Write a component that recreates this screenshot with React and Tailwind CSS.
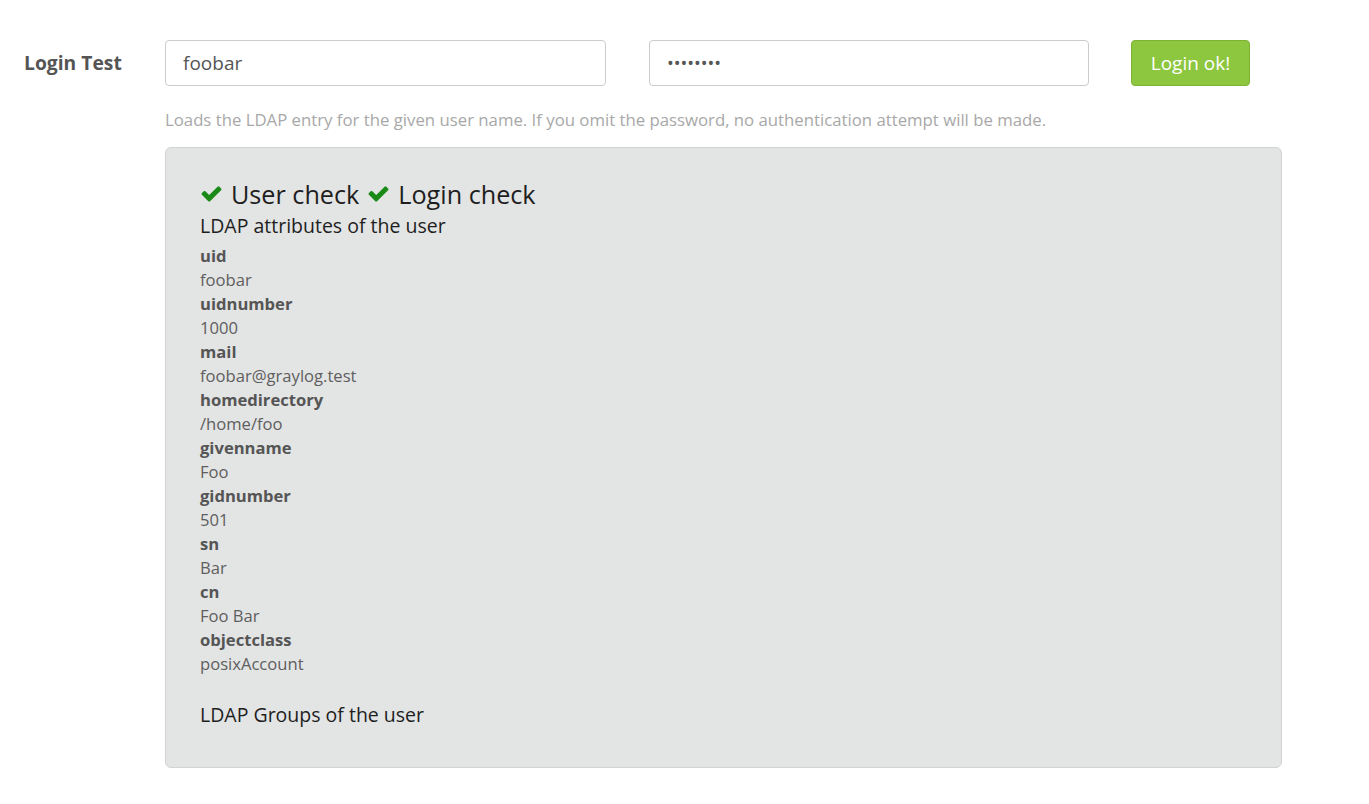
import React from 'react';

const attributes = [
    ['uid', 'foobar'],
    ['uidnumber', '1000'],
    ['mail', 'foobar@graylog.test'],
    ['homedirectory', '/home/foo'],
    ['givenname', 'Foo'],
    ['gidnumber', '501'],
    ['sn', 'Bar'],
    ['cn', 'Foo Bar'],
    ['objectclass', 'posixAccount'],
];

function Check() {
    return (
        <svg viewBox="0 0 1792 1792" className="w-[23px] h-[23px] inline-block mr-[8px] relative top-[-1px]" fill="#1a8a17">
            <path d="M1671 566q0 40-28 68l-724 724-136 136q-28 28-68 28t-68-28l-136-136-362-362q-28-28-28-68t28-68l136-136q28-28 68-28t68 28l294 295 656-657q28-28 68-28t68 28l136 136q28 28 28 68z" />
        </svg>
    );
}

export default function App() {
    return (
        <div className="min-h-screen bg-white font-['Open_Sans',sans-serif] text-[#555]">
            <div className="pt-[40px] pl-[24px] w-[1282px]">
                {/* Form row */}
                <div className="flex items-center h-[46px]">
                    <label className="w-[141px] text-[19.3px] font-bold text-[#555]">Login Test</label>
                    <input
                        className="w-[441px] h-[46px] border border-[#ccc] rounded-[4px] px-[17px] text-[19px] text-[#555] outline-none"
                        defaultValue="foobar"
                    />
                    <input
                        type="password"
                        className="ml-[43px] w-[440px] h-[46px] border border-[#ccc] rounded-[4px] px-[17px] text-[18px] text-[#555] outline-none"
                        defaultValue="foobar12"
                    />
                    <button className="ml-[42px] w-[119px] h-[46px] bg-[#8dc63f] border border-[#7eb233] rounded-[4px] text-white text-[19px]">
                        Login ok!
                    </button>
                </div>

                <p className="ml-[141px] mt-[23px] text-[16.75px] leading-[22px] text-[#a8a8a8]">
                    Loads the LDAP entry for the given user name. If you omit the password, no authentication attempt will be made.
                </p>

                {/* Result panel */}
                <div className="ml-[141px] mt-[16px] h-[621px] bg-[#e3e4e4] border border-[#d2d4d4] rounded-[6px] pl-[34px] pt-[28px]">
                    <h2 className="text-[25.2px] leading-[36px] text-[#1e1e1e] flex items-center">
                        <Check />User check <span className="ml-[8px]" /><Check />Login check
                    </h2>
                    <h3 className="text-[19.5px] leading-[28px] text-[#1e1e1e]">LDAP attributes of the user</h3>
                    <dl className="mt-[4px] text-[16.6px] leading-[24px]">
                        {attributes.map(([k, v]) => (
                            <React.Fragment key={k}>
                                <dt className="font-bold text-[#555]">{k}</dt>
                                <dd className="text-[#5e5e5e]">{v}</dd>
                            </React.Fragment>
                        ))}
                    </dl>
                    <h3 className="mt-[25px] text-[19.5px] leading-[28px] text-[#1e1e1e]">LDAP Groups of the user</h3>
                </div>
            </div>
        </div>
    );
}
